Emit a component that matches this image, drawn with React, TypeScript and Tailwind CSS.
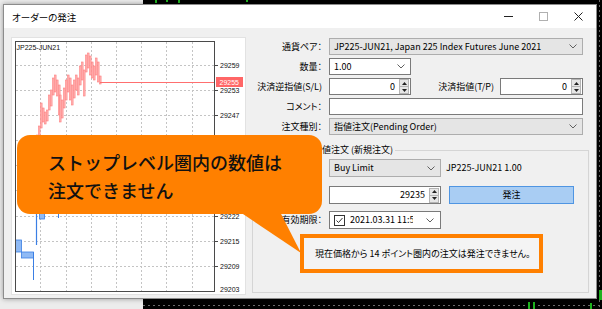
import React from "react";

const ui = "font-['Noto_Sans_CJK_JP','Liberation_Sans',sans-serif] [font-feature-settings:'palt']";

// bars of the mini chart, page coords: [x, top, bottom]
const redBars: [number, number, number][] = [
	[35, 150, 175], [37, 135, 152], [39, 126, 142], [41, 103, 128], [43, 108, 122], [45, 112, 124],
	[47, 110, 121], [49, 95, 110], [51, 90, 106], [53, 78, 95], [55, 75, 92], [57, 80, 96],
	[59, 85, 115], [60, 95, 122], [62, 100, 118], [64, 88, 108], [66, 80, 100], [68, 75, 92],
	[70, 78, 100], [72, 85, 105], [74, 80, 98], [76, 75, 90], [78, 78, 95], [80, 66, 85],
	[82, 62, 80], [84, 70, 96], [86, 55, 72], [88, 53, 68], [90, 56, 75], [92, 62, 78],
	[94, 66, 80], [96, 58, 75], [98, 62, 82], [100, 76, 84],
];

const priceRows = [
	{ y: 28, p: "29259" },
	{ y: 53, p: "29253" },
	{ y: 78, p: "29247" },
	{ y: 103, p: "29241" },
	{ y: 128, p: "29235" },
	{ y: 153, p: "29229" },
	{ y: 179, p: "29222" },
	{ y: 204, p: "29215" },
	{ y: 229, p: "29209" },
];

const gridX = [29, 55, 80, 105, 130, 155, 181];

const Chevron = () => (
	<svg width="8" height="5" viewBox="0 0 8 5" className="shrink-0">
		<path d="M0.5 0.5 L4 4 L7.5 0.5" stroke="#606060" fill="none" strokeWidth="1" />
	</svg>
);

const Spinner = () => (
	<div className="w-[10px] h-[15px] ml-[4px] mr-px border border-[#b4b4b4] bg-[#e6e6e6] flex flex-col">
		<div className="flex-1 flex items-center justify-center border-b border-[#b4b4b4]">
			<svg width="5" height="3" viewBox="0 0 5 3"><path d="M0 3 L2.5 0 L5 3 Z" fill="#222" /></svg>
		</div>
		<div className="flex-1 flex items-center justify-center">
			<svg width="5" height="3" viewBox="0 0 5 3"><path d="M0 0 L2.5 3 L5 0 Z" fill="#222" /></svg>
		</div>
	</div>
);

const GraySelect = ({ value, className = "" }: { value: string; className?: string }) => (
	<div className={`h-[17px] border border-[#adadad] bg-[#e5e5e5] flex items-center pl-[4px] pr-[5px] ${className}`}>
		<span className="flex-1 truncate">{value}</span>
		<Chevron />
	</div>
);

const SpinInput = ({ value, className = "" }: { value: string; className?: string }) => (
	<div className={`h-[17px] border border-[#7a7a7a] bg-white flex items-center ${className}`}>
		<span className="flex-1 text-right">{value}</span>
		<Spinner />
	</div>
);

const Label = ({ children }: { children: React.ReactNode }) => (
	<div className="text-right whitespace-nowrap">{children}</div>
);

const ChartPanel = () => (
	<div className="w-[235px] h-[258px] bg-white border border-[#e2e2e2] shrink-0">
		<svg width="233" height="256" viewBox="1 1 233 256" className="block">
			{priceRows.map((r) => (
				<line key={r.y} x1="5" x2="203" y1={r.y + 0.5} y2={r.y + 0.5} stroke="#c4c4c4" strokeDasharray="2 2" />
			))}
			{gridX.map((x) => (
				<line key={x} x1={x + 0.5} x2={x + 0.5} y1="5" y2="254" stroke="#c4c4c4" strokeDasharray="2 2" />
			))}
			{redBars.map(([x, t, b]) => (
				<rect key={x} x={x - 11 - 0.5} y={t - 37} width="1.6" height={b - t} fill="#ffb3b3" stroke="#ff7f7f" strokeWidth="0.6" />
			))}
			<line x1="89" x2="204" y1="45.5" y2="45.5" stroke="#ff6f6f" />
			{/* blue bars */}
			<rect x="4.5" y="203" width="6" height="12" fill="#8fbaf5" stroke="#3b7fe4" strokeWidth="0.8" />
			<rect x="10.5" y="215" width="12" height="6" fill="#8fbaf5" stroke="#3b7fe4" strokeWidth="0.8" />
			<line x1="22.5" x2="22.5" y1="215" y2="243" stroke="#3b7fe4" />
			<line x1="25.5" x2="25.5" y1="177" y2="208" stroke="#3b7fe4" strokeWidth="1.2" />
			<rect x="28.5" y="176" width="5" height="6" fill="#8fbaf5" stroke="#3b7fe4" strokeWidth="0.8" />
			<line x1="47.5" x2="47.5" y1="176" y2="181" stroke="#3b7fe4" />
			<rect x="4.5" y="4.5" width="199" height="250" fill="none" stroke="#4a4a4a" />
			{priceRows.map((r) => (
				<g key={"t" + r.y}>
					<line x1="204" x2="207" y1={r.y + 0.5} y2={r.y + 0.5} stroke="#4a4a4a" />
					<text x="209" y={r.y + 3} fontSize="7" fontFamily="Liberation Sans, sans-serif" fill="#111">{r.p}</text>
				</g>
			))}
			<text x="209" y="255" fontSize="7" fontFamily="Liberation Sans, sans-serif" fill="#111">29203</text>
			<rect x="205" y="40" width="27" height="10" fill="#ff6666" />
			<text x="208.5" y="48" fontSize="7" fontFamily="Liberation Sans, sans-serif" fill="#fff">29255</text>
			<text x="5.5" y="13" fontSize="7" fontFamily="Liberation Sans, sans-serif" fill="#111">JP225-JUN21</text>
		</svg>
	</div>
);

const RightForm = () => (
	<div className="w-[339px] flex flex-col">
		<div className="grid grid-cols-[71px_1fr] gap-x-[7px] gap-y-[3px] pr-[7px] mt-px items-center">
			<Label>通貨ペア：</Label>
			<GraySelect value="JP225-JUN21, Japan 225 Index Futures June 2021" />

			<Label>数量：</Label>
			<div className="h-[17px] w-[82px] border border-[#7a7a7a] bg-white flex items-center pl-[4px] pr-[5px]">
				<span className="flex-1">1.00</span>
				<Chevron />
			</div>

			<Label>決済逆指値(S/L)</Label>
			<div className="flex items-center">
				<SpinInput value="0" className="w-[82px]" />
				<div className="flex-1 text-right pr-[6px] whitespace-nowrap">決済指値(T/P)</div>
				<SpinInput value="0" className="w-[83px]" />
			</div>

			<Label>コメント：</Label>
			<div className="h-[17px] border border-[#7a7a7a] bg-white" />

			<Label>注文種別：</Label>
			<GraySelect value="指値注文(Pending Order)" />
		</div>

		{/* group box */}
		<div className="mt-[15px] ml-px w-[337px] h-[143px] border border-[#d5d5d5] flex flex-col">
			<div className="-mt-[7px] ml-[58px] px-[2px] w-fit h-[12px] leading-[12px] bg-[#f0f0f0]">指値注文 (新規注文)</div>
			<div className="grid grid-cols-[69px_1fr] gap-x-[7px] items-center mt-[3px]">
				<div />
				<div className="flex items-center">
					<GraySelect value="Buy Limit" className="w-[112px] h-[18px]" />
					<span className="ml-[5px]">JP225-JUN21 1.00</span>
				</div>
			</div>
			<div className="grid grid-cols-[69px_1fr] gap-x-[7px] items-center mt-[9px]">
				<div />
				<div className="flex items-center">
					<SpinInput value="29235" className="w-[112px] h-[18px]" />
					<button className="ml-[8px] w-[125px] h-[18px] bg-[#a9cdf3] border border-[#4f95e2] flex items-center justify-center">
						発注
					</button>
				</div>
			</div>
			<div className="grid grid-cols-[69px_1fr] gap-x-[7px] items-center mt-[7px]">
				<Label>有効期限：</Label>
				<div className="w-[112px] h-[18px] border border-[#7a7a7a] bg-white flex items-center pl-[4px] pr-[6px]">
					<svg width="11" height="11" viewBox="0 0 11 11" className="shrink-0">
						<rect x="0.5" y="0.5" width="10" height="10" fill="#fff" stroke="#333" />
						<path d="M2.5 5.5 L4.5 7.5 L8.5 3" stroke="#333" fill="none" strokeWidth="1" />
					</svg>
					<span className="ml-[5px] w-[63px] overflow-hidden whitespace-nowrap">2021.03.31 11:56</span>
					<span className="ml-auto"><Chevron /></span>
				</div>
			</div>
			<div className="mt-[5px] ml-[47px] w-[243px] h-[39px] border-[4px] border-[#ff8000] bg-[#f4f4f4] flex items-center pl-[11px] whitespace-nowrap">
				現在価格から 14 ポイント圏内の注文は発注できません。
			</div>
		</div>
	</div>
);

export default function App() {
	return (
		<div className={`relative w-[602px] h-[309px] overflow-hidden bg-[linear-gradient(to_right,#ececec_143px,#000_143px)] pt-[4px] pl-[3px] text-[9px] leading-[12px] text-black ${ui}`}>
			{/* trading chart peeking out behind the dialog */}
			<svg className="absolute left-0 top-0" width="602" height="309" viewBox="0 0 602 309">
				<line x1="143" x2="602" y1="305.5" y2="305.5" stroke="#6a6a6a" strokeDasharray="2 3" />
				<line x1="599.5" x2="599.5" y1="0" y2="309" stroke="#6a6a6a" strokeDasharray="2 3" />
				<rect x="155" y="0" width="2" height="3" fill="#1fb51f" />
				<rect x="166" y="0" width="2" height="2" fill="#1fb51f" />
				<rect x="178" y="0" width="2" height="3" fill="#1fb51f" />
				<rect x="246" y="0" width="2" height="2" fill="#1fb51f" />
				<rect x="528" y="302" width="2" height="7" fill="#1fb51f" />
				<rect x="533" y="302" width="2" height="7" fill="#1fb51f" />
				<rect x="590" y="303" width="2" height="6" fill="#1fb51f" />
				<rect x="599" y="290" width="3" height="10" fill="#1fb51f" />
			</svg>

			<div className="relative w-[594px] h-[295px] border border-[#8c8c8c] bg-[#f0f0f0] shadow-[0_0_5px_rgba(0,0,0,0.35)] flex flex-col">
				{/* title bar */}
				<div className="h-[23px] bg-white flex items-center pl-[8px] shrink-0">
					<span className="text-[9.5px]">オーダーの発注</span>
					<div className="ml-auto flex items-center">
						<div className="w-[35px] h-[23px] flex items-center justify-center">
							<svg width="9" height="1"><line x1="0" x2="9" y1="0.5" y2="0.5" stroke="#222" /></svg>
						</div>
						<div className="w-[35px] h-[23px] flex items-center justify-center">
							<svg width="9" height="9"><rect x="0.5" y="0.5" width="8" height="8" fill="none" stroke="#b0b0b0" /></svg>
						</div>
						<div className="w-[35px] h-[23px] flex items-center justify-center">
							<svg width="9" height="9"><path d="M0.5 0.5 L8.5 8.5 M8.5 0.5 L0.5 8.5" stroke="#222" /></svg>
						</div>
					</div>
				</div>

				<div className="flex gap-[5px] pt-[9px] pl-[7px]">
					<ChartPanel />
					<RightForm />
				</div>
			</div>

			{/* annotation callout */}
			<div className="absolute left-[17px] top-[135px] w-[305px] h-[79px] rounded-[13px] bg-[#ff8000] pl-[31px] pt-[13px] text-[18px] leading-[28px] text-[#111] font-medium [font-feature-settings:normal]">
				ストップレベル圏内の数値は
				<br />
				注文できません
			</div>
			<svg className="absolute left-[225px] top-[200px]" width="80" height="55" viewBox="0 0 80 55">
				<polygon points="6,6 52,6 76,53" fill="#ff8000" />
			</svg>
		</div>
	);
}
